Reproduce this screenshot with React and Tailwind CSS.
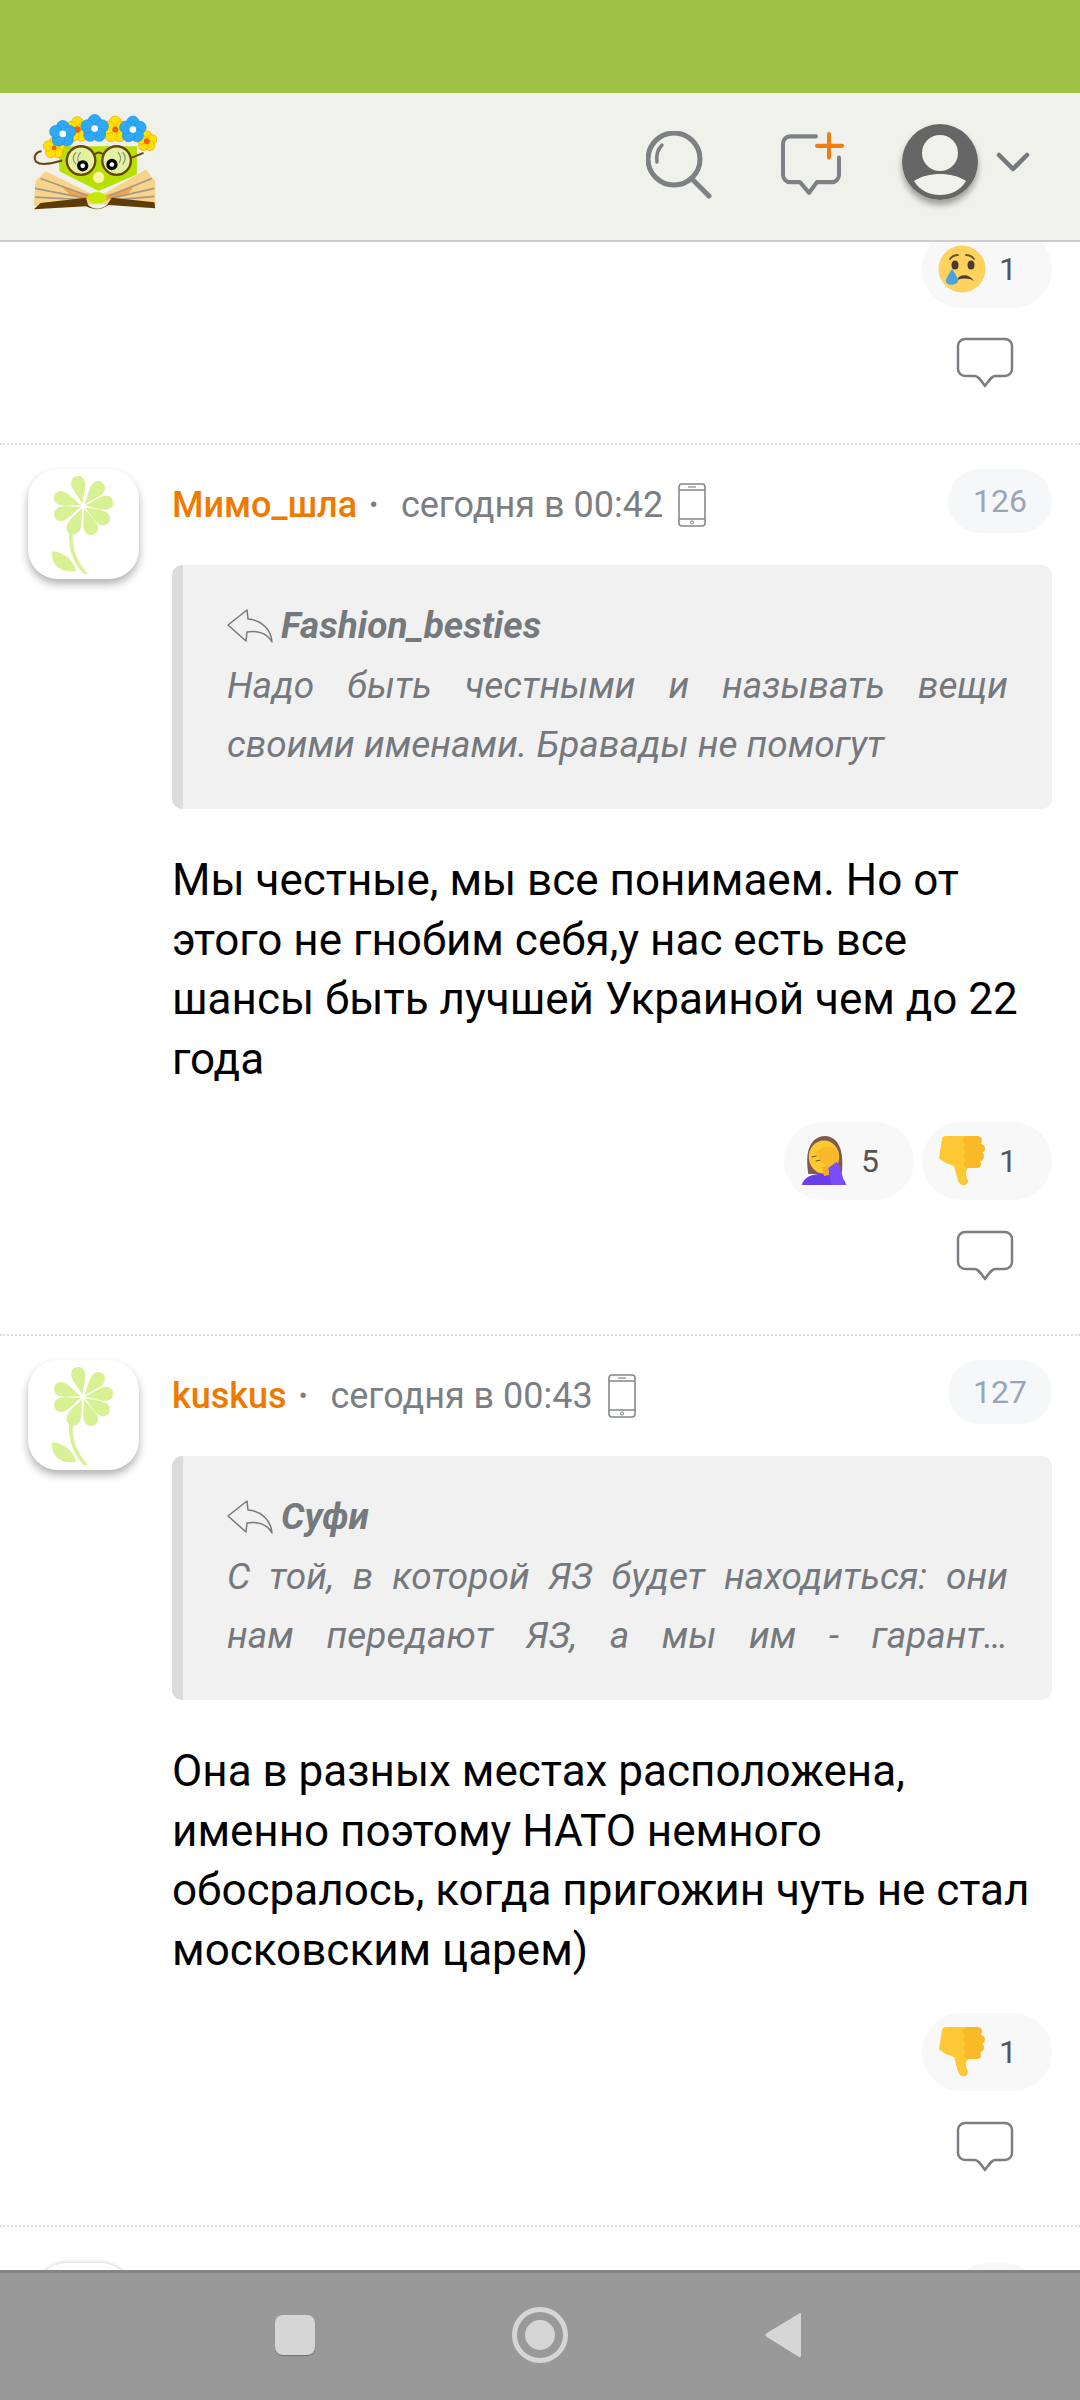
import { Fragment } from 'react';

const grayIcon = '#7b7f83';

function Flower({ x, y, r, color, edge, center, dot }) {
  const petals = [0, 72, 144, 216, 288];
  return (
    <g transform={`translate(${x} ${y})`}>
      {petals.map((a) => (
        <circle key={a} cx={r * Math.sin((a * Math.PI) / 180)} cy={-r * Math.cos((a * Math.PI) / 180)} r={r * 0.85} fill={color} stroke={edge} strokeWidth="2" />
      ))}
      <circle r={dot} fill={center} />
    </g>
  );
}

function Logo() {
  return (
    <svg viewBox="100 65 375 295" className="w-[125px] h-[98px] mb-[10px]">
      <path d="M180 165 L415 165 L415 250 L300 300 L182 240 Z" fill="#b7e000" />
      <path d="M140 240 L298 318 L298 340 L105 345 L110 270 Z" fill="#f7d38c" />
      <path d="M442 235 L300 318 L300 340 L470 345 L470 270 Z" fill="#f7d38c" />
      <path d="M190 288 L298 318 L298 332 L215 312 Z" fill="#f3a14a" />
      <path d="M405 288 L300 318 L300 332 L385 312 Z" fill="#f3a14a" />
      <g stroke="#a39a85" strokeWidth="5" fill="none">
        <path d="M125 262 L270 315" />
        <path d="M108 292 L262 322" />
        <path d="M108 318 L260 326" />
        <path d="M460 262 L330 315" />
        <path d="M468 292 L335 322" />
        <path d="M468 316 L335 328" />
      </g>
      <path d="M105 355 L125 336 L262 320 L268 342 Q295 365 325 342 L340 320 L468 334 L470 352 L330 342 Q295 365 262 346 Z" fill="#5f3c06" />
      <ellipse cx="295" cy="320" rx="29" ry="17" fill="#c4ea04" />
      <ellipse cx="300" cy="259" rx="17" ry="17" fill="#fdf2a6" />
      <path d="M190 208 C160 215 130 225 112 212 C100 195 115 180 128 180" fill="none" stroke="#6a4410" strokeWidth="6" />
      <path d="M398 200 L435 185" fill="none" stroke="#6a4410" strokeWidth="6" />
      <circle cx="247" cy="208" r="43" fill="#e3f2a0" stroke="#6a4410" strokeWidth="7" />
      <circle cx="354" cy="208" r="43" fill="#e3f2a0" stroke="#6a4410" strokeWidth="7" />
      <path d="M288 190 Q300 178 314 190" fill="none" stroke="#6a4410" strokeWidth="6" />
      <path d="M232 183 Q215 200 232 220 M246 183 Q232 198 240 215 M372 183 Q388 200 372 220 M358 183 Q372 198 362 215" fill="none" stroke="#8f9a80" strokeWidth="4" />
      <circle cx="252" cy="224" r="17" fill="#000" />
      <circle cx="252" cy="224" r="7" fill="#fff" />
      <circle cx="340" cy="220" r="17" fill="#000" />
      <circle cx="340" cy="220" r="7" fill="#fff" />
      <Flower x={166} y={170} r={18} color="#ffe000" edge="#e8a800" center="#f2600c" dot={7} />
      <Flower x={445} y={150} r={17} color="#ffe000" edge="#e8a800" center="#f2600c" dot={9} />
      <Flower x={236} y={115} r={21} color="#ffe000" edge="#e8a800" center="#f2600c" dot={10} />
      <Flower x={350} y={115} r={22} color="#ffe000" edge="#e8a800" center="#f2600c" dot={9} />
      <Flower x={192} y={128} r={22} color="#2fa9f5" edge="#1a8fe0" center="#fff" dot={10} />
      <Flower x={288} y={112} r={23} color="#2fa9f5" edge="#1a8fe0" center="#fff" dot={10} />
      <Flower x={403} y={115} r={22} color="#2fa9f5" edge="#1a8fe0" center="#fff" dot={10} />
    </svg>
  );
}

function AvatarFlower() {
  const angles = [-12, 40, 82, 122, 160, 204, 250, 290];
  return (
    <svg viewBox="0 0 111 110" className="w-full h-full">
      <path d="M45 63 C43 80 50 94 60 105 L56 105 C46 96 40 80 41 63 Z" fill="#d9f195" />
      <path d="M24 82 C38 84 46 92 48 102 C34 104 23 98 24 82 Z" fill="#d9f195" />
      {angles.map((a) => (
        <path key={a} transform={`rotate(${a} 55 37)`} d="M55 35 C53 28 48 20 48 14 C48 4 62 4 62 14 C62 20 57 28 55 35 Z" fill="#d9f195" />
      ))}
    </svg>
  );
}

function CryFace() {
  return (
    <svg viewBox="0 0 48 48" className="w-[48px] h-[48px] shrink-0">
      <circle cx="24" cy="24" r="23.5" fill="#fdd25e" />
      <path d="M12 14 Q15 10 20 10 M36 14 Q33 10 28 10" stroke="#6b5030" strokeWidth="1.8" fill="none" strokeLinecap="round" />
      <ellipse cx="17" cy="20" rx="3.5" ry="4.5" fill="#4d3c2e" />
      <ellipse cx="33" cy="20" rx="3.5" ry="4.5" fill="#4d3c2e" />
      <path d="M19 35 C21 29 31 28 36 36 C31 33 25 33 19 35 Z" fill="#4d3c2e" />
      <path d="M14 24 C11 29 8 33 8 36 C8 41 19 41 20 36 C20 33 17 28 14 24 Z" fill="#4aa3df" />
    </svg>
  );
}

function FacepalmWoman() {
  return (
    <svg viewBox="0 0 43 50" preserveAspectRatio="none" className="w-[45px] h-[50px] shrink-0">
      <path d="M6 38 C3 18 6 1 22 0 C37 1 40 18 38 38 Z" fill="#7d5c50" />
      <path d="M0 49 C1 43 6 39 16 38 L28 38 C37 39 41 43 42 49 Z" fill="#6a3de8" />
      <ellipse cx="21" cy="21" rx="14.5" ry="16.5" fill="#fcc934" />
      <path d="M9 21 L14 20 M13 25 L18 24" stroke="#7a5a20" strokeWidth="1" />
      <path d="M13 17 C18 10 28 8 33 14 C37 20 36 26 31 30 L26 33 L18 25 Z" fill="#f7b92a" />
      <path d="M19 31 L24 30 L26 39 L21 40 Z" fill="#f3ae22" />
      <path d="M25 32 L33 26 L36 30 L41 49 L28 49 Z" fill="#7c4dff" />
    </svg>
  );
}

function ThumbDown() {
  return (
    <svg viewBox="0 0 48 52" className="w-[50px] h-[52px] shrink-0">
      <path d="M4 4 C4 2 6 1 8 1 L34 1 L36 30 C30 32 28 34 28 40 L30 46 C30 50 26 51 24 50 C21 49 20 46 19 42 L16 31 C10 29 3 26 1 23 Z" fill="#fcc934" />
      <rect x="25" y="1" width="19" height="9" rx="4.5" fill="#f9b928" />
      <rect x="26" y="9" width="21" height="9" rx="4.5" fill="#f9b928" />
      <rect x="26" y="17" width="20" height="9" rx="4.5" fill="#f9b928" />
      <rect x="26" y="25" width="17" height="8" rx="4" fill="#f9b928" />
    </svg>
  );
}

function ReactionPill({ emoji, count }) {
  return (
    <div className="w-[130px] h-[78px] rounded-[39px] bg-[#f8f8f8] flex items-center pl-[16px] gap-[13px]">
      <div className="w-[48px] flex items-center justify-center">{emoji}</div>
      <span className="text-[32px] leading-none text-[#555]">{count}</span>
    </div>
  );
}

function BubbleIcon() {
  return (
    <svg viewBox="0 0 58 52" className="w-[58px] h-[52px]" fill="none" stroke={grayIcon} strokeWidth="2.5" strokeLinejoin="round">
      <path d="M9 2 H49 A7 7 0 0 1 56 9 V32 A7 7 0 0 1 49 39 H39 C36 39 34 42 29 49 C24 42 22 39 19 39 H9 A7 7 0 0 1 2 32 V9 A7 7 0 0 1 9 2 Z" />
    </svg>
  );
}

function PhoneIcon() {
  return (
    <svg viewBox="0 0 28 44" className="w-[28px] h-[44px]" fill="none" stroke="#85898c" strokeWidth="1.6">
      <rect x="1" y="1" width="26" height="42" rx="3" />
      <path d="M1 7 H27 M1 36 H27" />
      <path d="M10 4 H18" strokeWidth="1.2" />
      <circle cx="14" cy="39.5" r="1.6" strokeWidth="1" />
    </svg>
  );
}

function ReplyIcon() {
  return (
    <svg viewBox="0 0 46 34" className="w-[46px] h-[34px] shrink-0" fill="none" stroke="#75797d" strokeWidth="1.5" strokeLinejoin="round">
      <path d="M20 1 L1 16 L19 32 L20 23 C30 21 40 24 45 33 C44 20 34 11 21 10 Z" />
    </svg>
  );
}

function Comment({ name, time, num, quoteAuthor, quote, quoteCut, lines, reactions }) {
  return (
    <div className="border-b-2 border-dotted border-[#dcdcdc] h-[891px] pt-[24px] pr-[28px] flex">
      <div className="w-[172px] shrink-0 pl-[28px]">
        <div className="w-[111px] h-[110px] rounded-[30px] bg-white shadow-[0_5px_8px_rgba(0,0,0,0.3)]">
          <AvatarFlower />
        </div>
      </div>
      <div className="flex-1 min-w-0">
        <div className="h-[72px] flex items-start justify-between">
          <div className="flex items-center h-[74px] pb-[2px] text-[#7b7f83]">
            <span className="text-[#ee7a00] text-[36px] font-medium">{name}</span>
            <span className="ml-[12px] mr-[23px] text-[26px]">•</span>
            <span className="text-[36px]">{time}</span>
            <span className="ml-[15px]"><PhoneIcon /></span>
          </div>
          <div className="w-[104px] h-[64px] rounded-[32px] bg-[#f6f7f9] text-[#9aa6b8] text-[32px] flex items-center justify-center">{num}</div>
        </div>
        <div className="h-[244px] mt-[24px] rounded-[10px] bg-[#f1f1f1] border-l-[11px] border-[#dcdcdc] pl-[44px] pr-[44px] pt-[31px] text-[#75797d] italic">
          <div className="flex items-center gap-[8px] h-[60px]">
            <ReplyIcon />
            <span className="text-[37px] font-bold">{quoteAuthor}</span>
          </div>
          <p className={quoteCut ? 'text-[37px] leading-[59px] text-justify [text-align-last:justify]' : 'text-[37px] leading-[59px] text-justify'}>{quote}</p>
        </div>
        <div className="mt-[42px] text-[44px] leading-[59.5px] text-black">
          {lines.map((line, i) => (
            <Fragment key={i}>{line}{i < lines.length - 1 && <br />}</Fragment>
          ))}
        </div>
        <div className="mt-[33px] flex justify-end gap-[8px]">
          {reactions.map((r, i) => <ReactionPill key={i} emoji={r.emoji} count={r.count} />)}
        </div>
        <div className="mt-[30px] flex justify-end pr-[38px]"><BubbleIcon /></div>
      </div>
    </div>
  );
}

export default function App() {
  return (
    <div className="w-[1080px] h-[2400px] flex flex-col overflow-hidden bg-white font-['Roboto',sans-serif]">
      <div className="h-[93px] bg-[#9fc246] shrink-0" />
      <header className="h-[149px] shrink-0 relative z-10 bg-[#f0f1ea] border-b-2 border-[#cccccc] flex items-center pl-[32px] pr-[50px]">
        <Logo />
        <div className="ml-auto flex items-center mb-[9px]">
          <svg viewBox="0 0 66 68" className="w-[66px] h-[68px] mt-[6px]" fill="none" stroke="#7d8184" strokeWidth="5" strokeLinecap="round">
            <circle cx="28" cy="28" r="26" />
            <path d="M46 48 L63 65" />
            <path d="M11 31 C10 24 12 18 16 14" strokeWidth="3.5" />
          </svg>
          <svg viewBox="0 0 64 60" preserveAspectRatio="none" className="w-[64px] h-[64px] ml-[68px] mt-[3px]" fill="none" stroke="#7d8184" strokeWidth="4" strokeLinejoin="round" strokeLinecap="round">
            <path d="M36 4 H10 A7 7 0 0 0 3 11 V40 A7 7 0 0 0 10 47 H20 L29 57 L37 47 H52 A7 7 0 0 0 59 40 V24" />
            <path d="M49 2 V24 M37 13 H62" stroke="#f07d10" />
          </svg>
          <div className="w-[76px] h-[76px] ml-[58px] rounded-full overflow-hidden shadow-[0_5px_6px_rgba(0,0,0,0.35)]">
            <svg viewBox="0 0 76 76" className="w-full h-full">
              <rect width="76" height="76" fill="#666" />
              <circle cx="38" cy="29" r="18" fill="#f0f1ea" />
              <path d="M12 57 C20 52 28 50 38 50 C48 50 56 52 64 57 C58 67 48 71 38 71 C28 71 18 67 12 57 Z" fill="#f0f1ea" />
            </svg>
          </div>
          <svg viewBox="0 0 34 20" className="w-[34px] h-[20px] ml-[18px]" fill="none" stroke="#75797d" strokeWidth="4.5" strokeLinecap="round" strokeLinejoin="round">
            <path d="M3 3 L17 17 L31 3" />
          </svg>
        </div>
      </header>

      <main className="flex-1 min-h-0 overflow-hidden">
        <div className="border-b-2 border-dotted border-[#dcdcdc] h-[203px] pr-[28px] flex flex-col items-end">
          <div className="-mt-[12px] flex">
            <ReactionPill emoji={<CryFace />} count="1" />
          </div>
          <div className="mt-[29px] pr-[38px]"><BubbleIcon /></div>
        </div>
        <Comment
          name="Мимо_шла"
          time="сегодня в 00:42"
          num="126"
          quoteAuthor="Fashion_besties"
          quote="Надо быть честными и называть вещи своими именами. Бравады не помогут"
          lines={['Мы честные, мы все понимаем. Но от', 'этого не гнобим себя,у нас есть все', 'шансы быть лучшей Украиной чем до 22', 'года']}
          reactions={[{ emoji: <FacepalmWoman />, count: '5' }, { emoji: <ThumbDown />, count: '1' }]}
        />
        <Comment
          name="kuskus"
          time="сегодня в 00:43"
          num="127"
          quoteAuthor="Суфи"
          quote="С той, в которой ЯЗ будет находиться: они нам передают ЯЗ, а мы им - гарант…"
          quoteCut
          lines={['Она в разных местах расположена,', 'именно поэтому НАТО немного', 'обосралось, когда пригожин чуть не стал', 'московским царем)']}
          reactions={[{ emoji: <ThumbDown />, count: '1' }]}
        />
        <div className="pt-[36px] pl-[36px] pr-[44px] flex justify-between">
          <div className="w-[95px] h-[60px] rounded-[30px] bg-white shadow-[0_0_4px_rgba(0,0,0,0.25)]" />
          <div className="w-[80px] h-[60px] rounded-[30px] bg-[#f8f8f8]" />
        </div>
      </main>

      <nav className="h-[130px] shrink-0 relative z-10 bg-[#999999] border-t-[3px] border-[#858585] flex items-center">
        <div className="w-[40px] h-[40px] ml-[275px] rounded-[8px] bg-[#d6d6d6] shadow-[0_1px_1px_rgba(0,0,0,0.25)] mb-[4px]" />
        <div className="w-[56px] h-[56px] ml-[197px] mb-[4px] rounded-full border-[5px] border-[#d6d6d6] flex items-center justify-center">
          <div className="w-[30px] h-[30px] rounded-full bg-[#d6d6d6]" />
        </div>
        <svg viewBox="0 0 37 46" className="w-[37px] h-[46px] ml-[197px] mb-[4px]">
          <path d="M35 1 C36 1 36 2 36 3 V43 C36 45 35 46 34 45 L2 25 C0 24 0 22 2 21 Z" fill="#d6d6d6" />
        </svg>
      </nav>
    </div>
  );
}
